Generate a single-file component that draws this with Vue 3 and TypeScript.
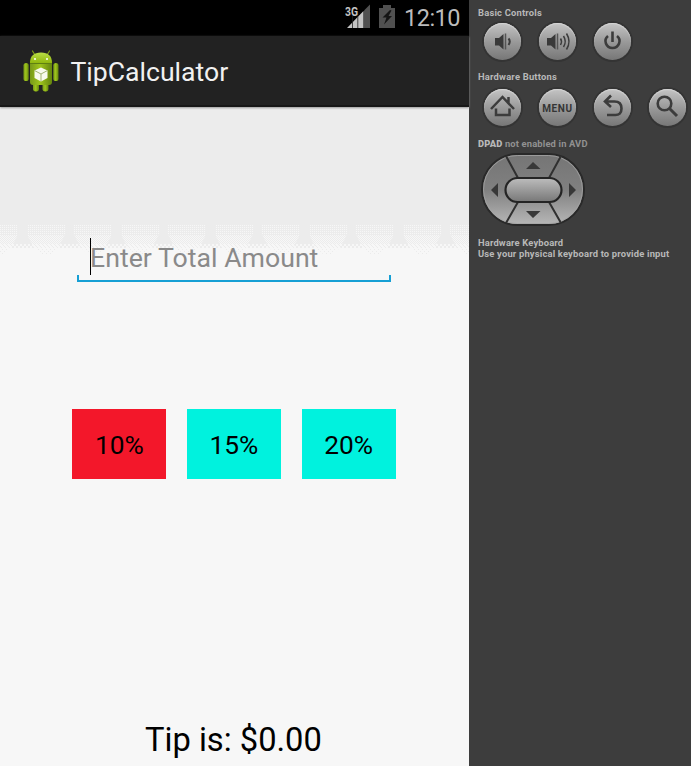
<script setup lang="ts">
import { ref } from 'vue'

interface Option { label: string; rate: number }
const options: Option[] = [
  { label: '10%', rate: 0.1 },
  { label: '15%', rate: 0.15 },
  { label: '20%', rate: 0.2 },
]
const selected = ref<number>(0)
const scallops: number[] = Array.from({ length: 11 }, (_, i) => i * 47 - 1)
const basic: string[] = ['volume-down', 'volume-up', 'power']
const hardware: string[] = ['home', 'menu', 'back', 'search']
</script>

<template>
  <div class="emulator">
    <main class="phone">
      <header class="status">
        <svg class="signal" width="26" height="26" viewBox="0 0 26 26">
          <path d="M2 24 18.500 7V24Z" fill="#c4c4c4" />
          <path d="M19 6.500 25 .5V24H19Z" fill="#515151" />
          <path d="M7.500 10V24M12.800 8V24" stroke="#222" stroke-width=".8" />
          <text x="0" y="11.5" class="network" textLength="13" lengthAdjust="spacingAndGlyphs">3G</text>
        </svg>
        <svg class="battery" width="16" height="23" viewBox="0 0 16 23">
          <path d="M0 3H4V0H12V3H16V23H0Z" fill="#505050" />
          <path d="M11 5 3.500 12.500H7.500L5 19.500 13 11H9.500L12.500 5.500Z" fill="#151515" />
        </svg>
        <span class="clock">12:10</span>
      </header>
      <header class="action">
        <svg class="droid" width="36" height="42" viewBox="0 0 36 42">
          <defs>
            <linearGradient id="green" x1="0" x2="1">
              <stop offset="0" stop-color="#78991a" /><stop offset=".45" stop-color="#9fc51c" /><stop offset="1" stop-color="#64840e" />
            </linearGradient>
            <linearGradient id="head" x2="0" y2="1">
              <stop stop-color="#b9df45" /><stop offset="1" stop-color="#91b80e" />
            </linearGradient>
          </defs>
          <path d="M12 5 9.500 1M24 5l2.500-4" stroke="#7e9d16" stroke-width="1.2" stroke-linecap="round" />
          <rect x=".5" y="13" width="5.200" height="18" rx="2.600" fill="url(#green)" />
          <rect x="30.300" y="13" width="5.200" height="18" rx="2.600" fill="url(#green)" />
          <rect x="10" y="31" width="6" height="10.500" rx="2.700" fill="url(#green)" />
          <rect x="19.500" y="31" width="6" height="10.500" rx="2.700" fill="url(#green)" />
          <path d="M7 14H29V32Q29 35 26 35H10Q7 35 7 32Z" fill="url(#green)" />
          <path d="M7 13Q7 2.500 18 2.500T29 13Z" fill="url(#head)" />
          <path d="M7 13.500H29" stroke="#5f8012" />
          <circle cx="12" cy="9" r="1" fill="#fff" /><circle cx="24" cy="9" r="1" fill="#fff" />
          <path d="M18 17.500 24.500 20.500V28L18 31.500 11.500 28V20.500Z" fill="#f8faef" />
          <path d="M11.500 20.500 18 24 24.500 20.500M18 24V31.500" fill="none" stroke="#a3b575" stroke-width="1" />
        </svg>
        <h1>TipCalculator</h1>
      </header>
      <section class="content">
        <svg class="backdrop" width="469" height="160" viewBox="0 0 469 160">
          <defs>
            <pattern id="sparse" width="2" height="2" patternUnits="userSpaceOnUse">
              <path d="M0 0H1V1H0Z" fill="#f7f7f7" />
            </pattern>
            <pattern id="dense" y="1" width="4" height="4" patternUnits="userSpaceOnUse">
              <path d="M0 0H2V2H0ZM2 2H4V4H2Z" fill="#f7f7f7" />
            </pattern>
            <pattern id="fine" width="2" height="2" patternUnits="userSpaceOnUse">
              <path d="M0 0H1V1H0ZM1 1H2V2H1Z" fill="#f7f7f7" />
            </pattern>
            <pattern id="dots" width="4" height="4" patternUnits="userSpaceOnUse">
              <path d="M0 0H1V1H0ZM2 2H3V3H2Z" fill="#ebebeb" />
            </pattern>
          </defs>
          <rect width="469" height="141" fill="#ececec" />
          <rect y="137" width="469" height="4" fill="url(#dense)" />
          <g v-for="x in scallops" :key="x">
            <path :d="`M${x-19} 118H${x+19}V127L${x+12} 141H${x-12}L${x-19} 127Z`" fill="url(#sparse)" />
            <path :d="`M${x-18} 129H${x+18}L${x+12} 141H${x-12}Z`" fill="url(#fine)" />
            <path :d="`M${x-12} 141H${x+12}L${x+5} 147H${x-5}Z`" fill="url(#dots)" />
          </g>
        </svg>
        <div class="amount">
          <i class="caret"></i><span>Enter Total Amount</span>
        </div>
        <div class="options">
          <button v-for="(option, i) in options" :key="option.rate" :class="{ chosen: selected === i }" @click="selected = i">{{ option.label }}</button>
        </div>
        <output>Tip is: $0.00</output>
      </section>
    </main>
    <aside class="controls">
      <h2 class="basic-title">Basic Controls</h2>
      <div class="round-row basic">
        <button v-for="kind in basic" :key="kind" class="round" :aria-label="kind">
          <svg width="37" height="37" viewBox="0 0 37 37">
            <g v-if="kind !== 'power'">
              <path :transform="kind === 'volume-up' ? 'translate(-3 0)' : ''" d="M11 15H15L19.500 11V26.500L15 22.500H11Z" fill="#393939" />
              <path :transform="kind === 'volume-up' ? 'translate(-3 0)' : ''" d="M21.500 10.500V26.500" stroke="#555" stroke-width="1.500" />
              <path v-if="kind === 'volume-down'" d="M24.500 15.500Q27 18.500 24.500 22" class="line" />
              <path v-else d="M21.500 15.500Q23.500 18.500 21.500 22M24.500 13Q28 18.500 24.500 24M27.500 10.500Q32.500 18.500 27.500 26.500" class="line fine-line" />
            </g>
            <path v-else d="M14 13C9 17 12 25 18.500 25S28 17 23 13M18.500 8.500V19" class="line power-line" />
          </svg>
        </button>
      </div>
      <h2 class="hardware-title">Hardware Buttons</h2>
      <div class="round-row hardware">
        <button v-for="kind in hardware" :key="kind" class="round" :aria-label="kind">
          <span v-if="kind === 'menu'" class="menu">MENU</span>
          <svg v-else width="37" height="37" viewBox="0 0 37 37">
            <path v-if="kind === 'home'" d="M7 20 18.500 8 30 20M24.500 14V8M12 19.500V26H25.500V19.500" class="line home-line" />
            <path v-else-if="kind === 'back'" d="M17 6.500 11 12.500 17 18M11.500 12.500H20.500Q27.500 12.500 27.500 19.500T20.500 26H13" class="line power-line" />
            <g v-else><circle cx="15.500" cy="14.500" r="6.800" class="line power-line" /><path d="M20.500 19.500 28 27" class="line handle" /></g>
          </svg>
        </button>
      </div>
      <h2 class="dpad-title"><b>DPAD</b> not enabled in AVD</h2>
      <svg class="dpad" width="106" height="76" viewBox="0 0 106 76">
        <defs>
          <linearGradient id="pad" x2="0" y2="1"><stop stop-color="#757575" /><stop offset=".5" stop-color="#808080" /><stop offset="1" stop-color="#b8b8b8" /></linearGradient>
          <linearGradient id="pill" x2="0" y2="1"><stop stop-color="#bdbdbd" /><stop offset="1" stop-color="#777" /></linearGradient>
        </defs>
        <rect x="2" y="2" width="102" height="71" rx="35.500" fill="url(#pad)" stroke="#292929" stroke-width="2" />
        <rect x="3.500" y="3.500" width="99" height="68" rx="34" fill="none" stroke="#a4a4a4" stroke-width=".8" />
        <path d="M26 4 38 26M81 4 69 26M38 50 26 71M69 50 81 71" stroke="#303030" stroke-width="2" />
        <rect x="25.500" y="26" width="56" height="24" rx="12" fill="url(#pill)" stroke="#242424" stroke-width="2.200" />
        <path d="M46 17 53 10 60.500 17ZM46 59H60.500L53 66ZM18 31V45L11 38ZM89 31 96 38 89 45Z" fill="#383838" />
      </svg>
      <div class="keyboard">Hardware Keyboard<br /><span class="hint">Use your physical keyboard to provide input</span></div>
    </aside>
  </div>
</template>

<style>
body { margin: 0; overflow: hidden; }
</style>

<style scoped>
.emulator { width: 691px; height: 766px; display: flex; overflow: hidden; font-family: Roboto, sans-serif; background: #3d3d3d; }
.phone { width: 469px; height: 766px; display: flex; flex-direction: column; background: #f7f7f7; }
.status { height: 36px; box-sizing: border-box; background: #000; color: #bcbcbc; display: flex; justify-content: flex-end; padding: 4px 9px 0 0; }
.signal { margin-right: 8px; }
.network { font: 700 12px Roboto, sans-serif; fill: #c4c4c4; stroke: #000; stroke-width: 1.500px; paint-order: stroke; }
.battery { margin: 1px 9px 0 0; }
.clock { font-size: 23.500px; line-height: 29px; width: 56px; white-space: nowrap; letter-spacing: -.5px; }
.action { height: 71px; box-sizing: border-box; background: #222; border-bottom: 2px solid #171717; box-shadow: 0 1px 2px #999; z-index: 1; display: flex; align-items: center; padding: 0 23px; }
h1 { margin: 2px 0 0 11.500px; color: #f1f1f1; font-size: 26.600px; line-height: 36px; font-weight: 400; white-space: nowrap; }
.content { height: 659px; display: grid; grid-template-rows: 131px 44px 127px 70px 1fr; justify-items: start; }
.backdrop { grid-area: 1 / 1; align-self: start; }
.amount { grid-area: 2 / 1; position: relative; box-sizing: border-box; width: 314px; height: 44px; margin-left: 77px; padding-left: 13px; color: #8a8a8a; font-size: 26.700px; line-height: 41px; white-space: nowrap; }
.amount::after { content: ''; position: absolute; left: 0; right: 0; bottom: 0; height: 7px; border: 2px solid #169fd4; border-top: 0; box-sizing: border-box; }
.caret { position: absolute; left: 13px; top: 0; width: 1px; height: 37px; background: #000; }
.options { grid-area: 4 / 1; display: flex; gap: 20.600px; margin-left: 72.400px; }
.options button { border: 0; padding: 0; width: 94px; height: 70.400px; background: #00f2de; color: #000; font: 26.300px/73px Roboto, sans-serif; }
.options .chosen { background: #f3172a; }
output { grid-area: 5 / 1; align-self: end; margin-left: 145px; font-size: 32.700px; line-height: 40px; padding-bottom: 6px; white-space: nowrap; }
.controls { width: 222px; box-sizing: border-box; padding: 7px 0 0 9px; background: #3d3d3d; color: #b8b8b8; }
h2, .keyboard { margin: 0; font-size: 9.400px; font-weight: 700; line-height: 11px; white-space: nowrap; letter-spacing: .15px; }
.basic-title { letter-spacing: .2px; }
.round-row { display: flex; gap: 18px; }
.basic { padding: 5px 0 0 6.400px; }
.hardware-title { margin-top: 11px; letter-spacing: .2px; }
.hardware { padding: 7px 0 0 6px; }
.round { width: 37px; height: 37px; flex: none; padding: 0; border: 0; border-radius: 50%; background: linear-gradient(#c4c4c4, #9a9a9a 50%, #777); box-shadow: inset 0 1px 1px #d5d5d5, 0 0 0 2px #343434; display: flex; align-items: center; justify-content: center; }
.line { fill: none; stroke: #3c3c3c; stroke-width: 2; }
.fine-line { stroke-width: 1.500; }
.power-line { stroke-width: 2.600; }
.home-line { stroke-width: 2.500; }
.handle { stroke-width: 3; }
.menu { color: #353535; font: 700 10px/37px Roboto, sans-serif; letter-spacing: .65px; padding-top: 2px; }
.dpad-title { margin-top: 12px; color: #919191; }
.dpad-title b { color: #b8b8b8; }
.dpad { display: block; margin: 3px 0 0 2px; }
.keyboard { margin-top: 9px; }
.hint { letter-spacing: .18px; }
</style>
